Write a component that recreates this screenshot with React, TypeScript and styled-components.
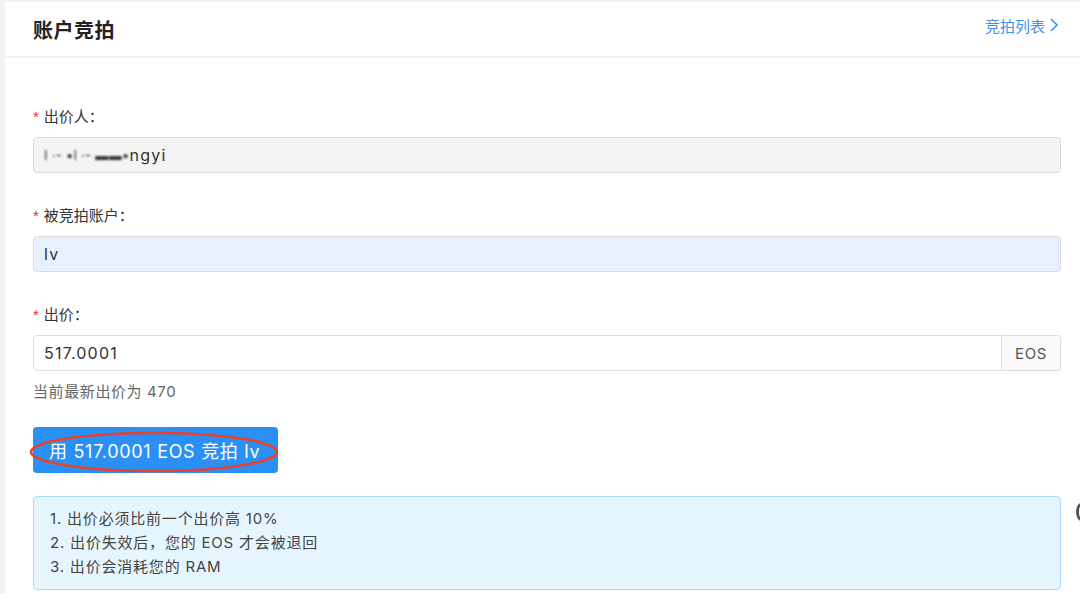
import React from 'react';
import styled, { createGlobalStyle } from 'styled-components';

const sans = `Inter, "Noto Sans CJK SC", sans-serif`;

const GlobalStyle = createGlobalStyle`
	html, body {
		margin: 0;
		padding: 0;
		background: #f0f2f5;
	}
	body {
		font-family: ${sans};
		color: #333;
	}
`;

const Page = styled.div`
	width: 1080px;
	height: 594px;
	overflow: hidden;
	padding: 2px 0 0 5px;
	box-sizing: border-box;
	position: relative;
`;

const Header = styled.div`
	height: 54px;
	background: #fff;
	display: flex;
	align-items: center;
	justify-content: space-between;
	padding: 0 21px 0 28px;
	margin-bottom: 2px;
`;

const Title = styled.h2`
	margin: 0;
	font-size: 20px;
	font-weight: 600;
	color: #222;
	font-family: "Noto Sans CJK SC", sans-serif;
	letter-spacing: 0.5px;
`;

const ListLink = styled.a`
	display: flex;
	align-items: center;
	gap: 4px;
	color: #3a95f0;
	font-size: 15px;
	font-family: "Noto Sans CJK SC", sans-serif;
	cursor: pointer;
	margin-top: -8px;
	svg {
		width: 10px;
		height: 16px;
	}
`;

const Body = styled.div`
	background: #fff;
	padding: 47px 19px 0 28px;
	height: 560px;
	box-sizing: border-box;
`;

const FormItem = styled.div<{ $gap?: number }>`
	margin-bottom: ${(p) => p.$gap ?? 31}px;
`;

const Label = styled.div`
	height: 22px;
	line-height: 22px;
	font-size: 15px;
	color: #333;
	margin-bottom: 10px;
	font-family: "Noto Sans CJK SC", sans-serif;
	&::before {
		content: '*';
		color: #f5222d;
		margin-right: 5px;
		font-family: "Liberation Sans", sans-serif;
	}
`;

const InputBox = styled.div<{ $variant?: 'disabled' | 'autofill' | 'normal' }>`
	flex: 1;
	height: 36px;
	box-sizing: border-box;
	border: 1px solid #dcdcdc;
	border-radius: 4px;
	padding: 0 10px;
	display: flex;
	align-items: center;
	font-size: 16px;
	letter-spacing: 1.2px;
	color: #333;
	background: ${(p) =>
		p.$variant === 'disabled' ? '#f4f4f4' : p.$variant === 'autofill' ? '#e8f0fe' : '#fff'};
`;

const Group = styled.div`
	display: flex;
	${InputBox} {
		border-top-right-radius: 0;
		border-bottom-right-radius: 0;
	}
`;

const Addon = styled.div`
	width: 59px;
	height: 36px;
	box-sizing: border-box;
	border: 1px solid #dcdcdc;
	border-left: none;
	border-radius: 0 4px 4px 0;
	background: #fafafa;
	display: flex;
	align-items: center;
	justify-content: center;
	font-size: 15px;
	letter-spacing: 0.6px;
	color: #555;
`;

const Blur = styled.span`
	filter: blur(1.1px);
	color: #333;
	font-size: 13px;
	letter-spacing: 0.3px;
`;

const Help = styled.div`
	height: 22px;
	line-height: 22px;
	margin-top: 10px;
	font-size: 15px;
	letter-spacing: 0.6px;
	color: #666;
`;

const ButtonWrap = styled.div`
	position: relative;
	width: 245px;
	margin-bottom: 23px;
`;

const SubmitButton = styled.button`
	width: 245px;
	height: 46px;
	border: none;
	border-radius: 4px;
	background: #2a90f6;
	color: #fff;
	font-size: 18px;
	letter-spacing: 0.7px;
	font-family: ${sans};
	padding: 0 16px;
	text-align: left;
	white-space: nowrap;
	cursor: pointer;
`;

const Annotation = styled.svg`
	position: absolute;
	left: -5px;
	top: 3px;
	width: 252px;
	height: 44px;
	pointer-events: none;
`;

const InfoBox = styled.div`
	background: #e6f6ff;
	border: 1px solid #a9dcff;
	border-radius: 4px;
	padding: 10px 16px 10px;
	font-size: 15px;
	line-height: 24px;
	letter-spacing: 0.8px;
	color: #444;
`;

const Edge = styled.div`
	position: absolute;
	right: -6px;
	top: 503px;
	width: 10px;
	height: 18px;
	border: 3px solid #555;
	border-radius: 50%;
	box-sizing: border-box;
`;

const notes = ['1. 出价必须比前一个出价高 10%', '2. 出价失效后，您的 EOS 才会被退回', '3. 出价会消耗您的 RAM'];

export default function App() {
	return (
		<>
			<GlobalStyle />
			<Page>
				<Header>
					<Title>账户竞拍</Title>
					<ListLink>
						竞拍列表
						<svg viewBox="0 0 10 16" fill="none" stroke="currentColor" strokeWidth="1.6">
							<polyline points="2,2 8,8 2,14" />
						</svg>
					</ListLink>
				</Header>
				<Body>
					<FormItem>
						<Label>出价人：</Label>
						<InputBox $variant="disabled">
							<Blur>I ·- ▪l ·- ▬▬▪</Blur>ngyi
						</InputBox>
					</FormItem>
					<FormItem>
						<Label>被竞拍账户：</Label>
						<InputBox $variant="autofill">lv</InputBox>
					</FormItem>
					<FormItem $gap={24}>
						<Label>出价：</Label>
						<Group>
							<InputBox>517.0001</InputBox>
							<Addon>EOS</Addon>
						</Group>
						<Help>当前最新出价为 470</Help>
					</FormItem>
					<ButtonWrap>
						<SubmitButton>用 517.0001 EOS 竞拍 lv</SubmitButton>
						<Annotation viewBox="0 0 252 44">
							<ellipse cx="126" cy="22" rx="123" ry="19" fill="none" stroke="#e8412c" strokeWidth="2.6" />
						</Annotation>
					</ButtonWrap>
					<InfoBox>
						{notes.map((n) => (
							<div key={n}>{n}</div>
						))}
					</InfoBox>
				</Body>
				<Edge />
			</Page>
		</>
	);
}
